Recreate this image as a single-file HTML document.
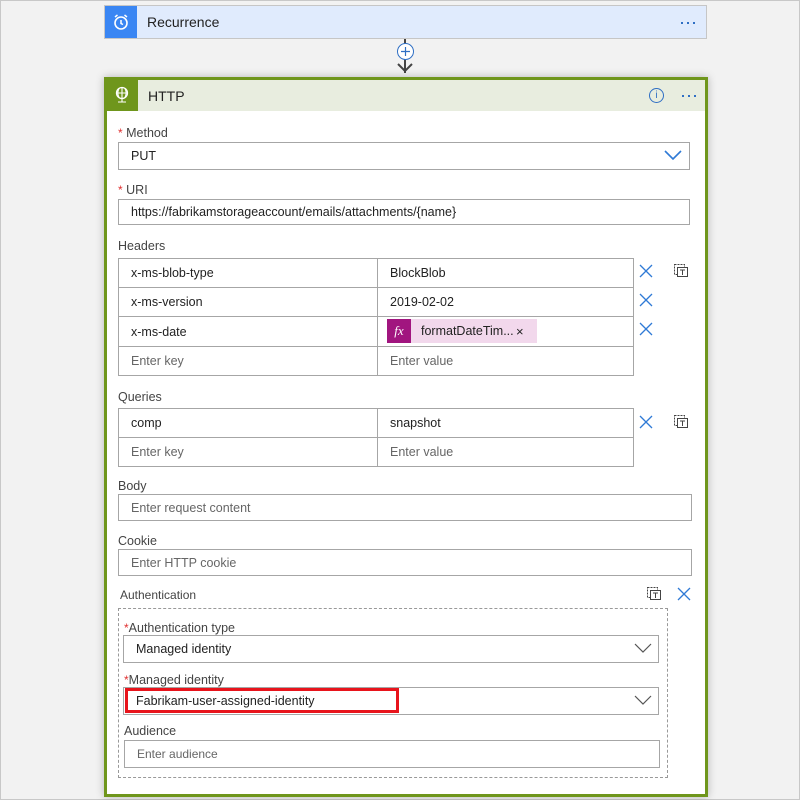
<!DOCTYPE html>
<html><head><style>
*{box-sizing:border-box;margin:0;padding:0}
body{width:800px;height:800px;background:#f2f2f2;font-family:"Liberation Sans",sans-serif;font-size:13px;color:#222;position:relative;overflow:hidden}
.a{position:absolute}
.lbl{position:absolute;font-size:12.5px;color:#444}
.st{color:#e03030;font-size:12px}
.inp{position:absolute;border:1px solid #a6a6a6;background:#fff;padding-left:12px;display:flex;align-items:center;font-size:12.5px}
.ph{color:#666}
.cell{position:absolute;border:1px solid #a6a6a6;background:#fff;display:flex;align-items:center;padding-left:12px;font-size:12.5px}
.chev{position:absolute}
.dots{position:absolute;width:16px;height:4px}
.dots i{position:absolute;top:0;width:2px;height:2px;background:#2f6fc4}
</style></head><body>
<div class="a" style="left:0;top:0;width:800px;height:800px;border:1px solid #c8c8c8"></div>
<!-- Recurrence -->
<div class="a" style="left:104px;top:5px;width:603px;height:34px;background:#e0ebfd;border:1px solid #c6c6c6"></div>
<div class="a" style="left:105px;top:6px;width:32px;height:32px;background:#3a86f3"></div>
<svg class="a" style="left:111px;top:12px" width="20" height="20" viewBox="0 0 20 20"><circle cx="10" cy="11" r="6" fill="none" stroke="#fff" stroke-width="1.6"/><path d="M10 8v3.5l2 1M4 5l2.5-2M16 5l-2.5-2" stroke="#fff" stroke-width="1.5" fill="none"/></svg>
<div class="a" style="left:147px;top:14px;font-size:14px">Recurrence</div>
<div class="dots" style="left:681px;top:22px"><i style="left:0"></i><i style="left:6px"></i><i style="left:12px"></i></div>
<!-- connector -->
<div class="a" style="left:404px;top:39px;width:2px;height:34px;background:#444"></div>
<div class="a" style="left:397px;top:43px;width:17px;height:17px;border-radius:50%;background:#fff;border:1px solid #2f6fc4"></div>
<svg class="a" style="left:397px;top:43px" width="17" height="17"><path d="M8.5 4v9M4 8.5h9" stroke="#2f6fc4" stroke-width="1.2"/></svg>
<svg class="a" style="left:396px;top:62px" width="18" height="12"><path d="M2 2l7 7 7-7" stroke="#444" stroke-width="2" fill="none"/></svg>
<!-- HTTP card -->
<div class="a" style="left:104px;top:77px;width:604px;height:720px;background:#fff;border:3px solid #6f961c;box-shadow:0 0 8px rgba(0,0,0,.25)"></div>
<div class="a" style="left:107px;top:80px;width:598px;height:31px;background:#e8eddf"></div>
<div class="a" style="left:107px;top:80px;width:31px;height:31px;background:#6f961c"></div>
<svg class="a" style="left:113px;top:85px" width="18" height="20" viewBox="0 0 18 20"><circle cx="9" cy="8" r="5.5" fill="none" stroke="#fff" stroke-width="1.3"/><path d="M3.5 8h11M9 2.5v11M6 3.5c-1.5 3-1.5 6 0 9M12 3.5c1.5 3 1.5 6 0 9M9 13.5v3M5 17h8" stroke="#fff" stroke-width="1.1" fill="none"/></svg>
<div class="a" style="left:148px;top:88px;font-size:14px">HTTP</div>
<div class="a" style="left:649px;top:88px;width:15px;height:15px;border:1.3px solid #2f6fc4;border-radius:50%;color:#2f6fc4;font-size:10px;text-align:center;line-height:13px">i</div>
<div class="dots" style="left:682px;top:95px"><i style="left:0"></i><i style="left:6px"></i><i style="left:12px"></i></div>

<div class="lbl" style="left:118px;top:126px"><span class="st">*</span> Method</div>
<div class="inp" style="left:118px;top:142px;width:572px;height:28px">PUT</div>
<svg class="chev" style="left:664px;top:150px" width="18" height="11"><path d="M1 1l8 8 8-8" stroke="#2f7ad6" stroke-width="1.6" fill="none"/></svg>

<div class="lbl" style="left:118px;top:183px"><span class="st">*</span> URI</div>
<div class="inp" style="left:118px;top:199px;width:572px;height:26px">https://fabrikamstorageaccount/emails/attachments/{name}</div>

<div class="lbl" style="left:118px;top:239px">Headers</div>
<div class="cell" style="left:118px;top:258px;width:260px;height:30px">x-ms-blob-type</div>
<div class="cell" style="left:377px;top:258px;width:257px;height:30px">BlockBlob</div>
<div class="cell" style="left:118px;top:287px;width:260px;height:30px">x-ms-version</div>
<div class="cell" style="left:377px;top:287px;width:257px;height:30px">2019-02-02</div>
<div class="cell" style="left:118px;top:316px;width:260px;height:31px">x-ms-date</div>
<div class="cell" style="left:377px;top:316px;width:257px;height:31px"></div>
<div class="a" style="left:387px;top:319px;width:150px;height:24px;background:#f2d8ec"></div>
<div class="a" style="left:387px;top:319px;width:24px;height:24px;background:#a1157f;color:#fff;font-family:'Liberation Serif',serif;font-style:italic;font-size:13px;text-align:center;line-height:24px">fx</div>
<div class="a" style="left:421px;top:324px;font-size:12.5px">formatDateTim...</div>
<div class="a" style="left:516px;top:324px;font-size:13px">×</div>
<div class="cell ph" style="left:118px;top:346px;width:260px;height:30px">Enter key</div>
<div class="cell ph" style="left:377px;top:346px;width:257px;height:30px">Enter value</div>
<svg class="a" style="left:639px;top:264px" width="14" height="14"><path d="M1 1l12 12M13 1L1 13" stroke="#2f7ad6" stroke-width="1.3"/></svg>
<svg class="a" style="left:639px;top:293px" width="14" height="14"><path d="M1 1l12 12M13 1L1 13" stroke="#2f7ad6" stroke-width="1.3"/></svg>
<svg class="a" style="left:639px;top:322px" width="14" height="14"><path d="M1 1l12 12M13 1L1 13" stroke="#2f7ad6" stroke-width="1.3"/></svg>
<svg class="a" style="left:673px;top:262px" width="16" height="16"><rect x="1.5" y="2.5" width="10" height="10" fill="none" stroke="#444" stroke-dasharray="2 1"/><rect x="4.5" y="5.5" width="10" height="9" fill="#fff" stroke="#444"/><path d="M7 8h5M9.5 8v5" stroke="#444"/></svg>

<div class="lbl" style="left:118px;top:390px">Queries</div>
<div class="cell" style="left:118px;top:408px;width:260px;height:30px">comp</div>
<div class="cell" style="left:377px;top:408px;width:257px;height:30px">snapshot</div>
<div class="cell ph" style="left:118px;top:437px;width:260px;height:30px">Enter key</div>
<div class="cell ph" style="left:377px;top:437px;width:257px;height:30px">Enter value</div>
<svg class="a" style="left:639px;top:415px" width="14" height="14"><path d="M1 1l12 12M13 1L1 13" stroke="#2f7ad6" stroke-width="1.3"/></svg>
<svg class="a" style="left:673px;top:413px" width="16" height="16"><rect x="1.5" y="2.5" width="10" height="10" fill="none" stroke="#444" stroke-dasharray="2 1"/><rect x="4.5" y="5.5" width="10" height="9" fill="#fff" stroke="#444"/><path d="M7 8h5M9.5 8v5" stroke="#444"/></svg>

<div class="lbl" style="left:118px;top:479px">Body</div>
<div class="inp ph" style="left:118px;top:494px;width:574px;height:27px">Enter request content</div>
<div class="lbl" style="left:118px;top:534px">Cookie</div>
<div class="inp ph" style="left:118px;top:549px;width:574px;height:27px">Enter HTTP cookie</div>

<div class="lbl" style="left:120px;top:588px;font-size:12px">Authentication</div>
<svg class="a" style="left:646px;top:585px" width="16" height="16"><rect x="1.5" y="2.5" width="10" height="10" fill="none" stroke="#444" stroke-dasharray="2 1"/><rect x="4.5" y="5.5" width="10" height="9" fill="#fff" stroke="#444"/><path d="M7 8h5M9.5 8v5" stroke="#444"/></svg>
<svg class="a" style="left:677px;top:587px" width="14" height="14"><path d="M1 1l12 12M13 1L1 13" stroke="#2f7ad6" stroke-width="1.3"/></svg>
<div class="a" style="left:118px;top:608px;width:550px;height:170px;border:1px dashed #999"></div>
<div class="lbl" style="left:124px;top:621px"><span class="st">*</span>Authentication type</div>
<div class="inp" style="left:123px;top:635px;width:536px;height:28px">Managed identity</div>
<svg class="chev" style="left:634px;top:643px" width="18" height="11"><path d="M1 1l8 8 8-8" stroke="#555" stroke-width="1.2" fill="none"/></svg>
<div class="lbl" style="left:124px;top:673px"><span class="st">*</span>Managed identity</div>
<div class="inp" style="left:123px;top:687px;width:536px;height:28px">Fabrikam-user-assigned-identity</div>
<div class="a" style="left:125px;top:688px;width:274px;height:25px;border:3px solid #e8141c"></div>
<svg class="chev" style="left:634px;top:695px" width="18" height="11"><path d="M1 1l8 8 8-8" stroke="#555" stroke-width="1.2" fill="none"/></svg>
<div class="lbl" style="left:124px;top:724px">Audience</div>
<div class="inp ph" style="left:124px;top:740px;width:536px;height:28px;font-size:12px">Enter audience</div>
</body></html>
